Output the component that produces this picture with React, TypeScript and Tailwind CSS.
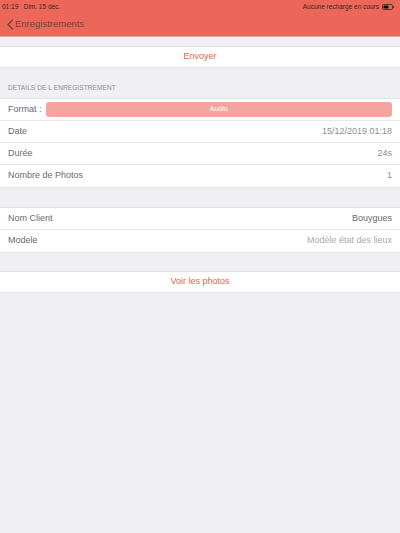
import React from "react";

// Rows
const Row = ({
  label,
  value,
  valueClassName = "text-[#8e8e93]",
  last,
}: {
  label: string;
  value: string;
  valueClassName?: string;
  last?: boolean;
}) => {
  return (
    <div
      className={`flex h-[22px] items-center justify-between bg-white px-[8px] text-[9px] ${
        last ? "" : "border-b border-[#e6e6ea]"
      }`}
    >
      <span className="text-[#6a6a6f]">{label}</span>
      <span className={valueClassName}>{value}</span>
    </div>
  );
};

const ActionRow = ({ text }: { text: string }) => {
  return (
    <div className="flex h-[22px] items-center justify-center border-y border-[#e3e3e8] bg-white text-[9px] text-[#ec5d50]">
      {text}
    </div>
  );
};

const Battery = () => (
  <svg width="12" height="6" viewBox="0 0 12 6">
    <rect x="0.5" y="0.5" width="10" height="5" rx="1.2" fill="none" stroke="#3a2a2a" strokeWidth="0.8" />
    <rect x="1.5" y="1.5" width="5" height="3" rx="0.4" fill="#111" />
    <rect x="11" y="2" width="0.9" height="2" rx="0.3" fill="#3a2a2a" />
  </svg>
);

export default function App() {
  return (
    <div
      className="flex min-h-[533px] w-[400px] flex-col bg-[#efeff4]"
      style={{ fontFamily: '"Liberation Sans", Arial, sans-serif' }}
    >
      {/* Header */}
      <div className="flex h-[37px] flex-col border-b border-[#d6b0ab] bg-[#ec6759]">
        <div className="flex h-[12px] items-center justify-between px-[2px] pt-[1px] text-[6.5px] text-[#3b2523]">
          <span>
            01:19&nbsp;&nbsp;&nbsp;Dim. 15 déc.
          </span>
          <span className="flex items-center gap-[3px] pr-[4px]">
            Aucune recharge en cours
            <Battery />
          </span>
        </div>
        <div className="flex h-[24px] items-center pl-[6px] text-[9px] text-[#6e4440]">
          <svg width="8" height="11" viewBox="0 0 8 11" className="mr-[1px]">
            <path d="M6.5 1 L2 5.5 L6.5 10" fill="none" stroke="#6e4440" strokeWidth="1.4" strokeLinecap="round" strokeLinejoin="round" />
          </svg>
          <span className="text-[9.5px]">Enregistrements</span>
        </div>
      </div>

      <div className="h-[9px]" />
      <ActionRow text="Envoyer" />

      <div className="flex h-[30px] items-end px-[8px] pb-[5px] text-[6.5px] tracking-[0.1px] text-[#8e8e93]">
        DETAILS DE L ENREGISTREMENT
      </div>

      <div className="border-y border-[#e3e3e8]">
        <div className="flex h-[22px] items-center gap-[4px] border-b border-[#e6e6ea] bg-white pl-[8px] pr-[8px] text-[9px]">
          <span className="text-[#6a6a6f]">Format :</span>
          <div className="flex h-[15px] flex-1 items-center justify-center rounded-[3px] bg-[#f4a59e] text-[7px] text-white">
            Audio
          </div>
        </div>
        <Row label="Date" value="15/12/2019 01:18" />
        <Row label="Durée" value="24s" />
        <Row label="Nombre de Photos" value="1" last />
      </div>

      <div className="h-[19px]" />

      <div className="border-y border-[#e3e3e8]">
        <Row label="Nom Client" value="Bouygues" valueClassName="text-[#6a6a6f]" />
        <Row label="Modele" value="Modèle état des lieux" valueClassName="text-[#a9a9ae]" last />
      </div>

      <div className="h-[18px]" />
      <ActionRow text="Voir les photos" />
    </div>
  );
}
